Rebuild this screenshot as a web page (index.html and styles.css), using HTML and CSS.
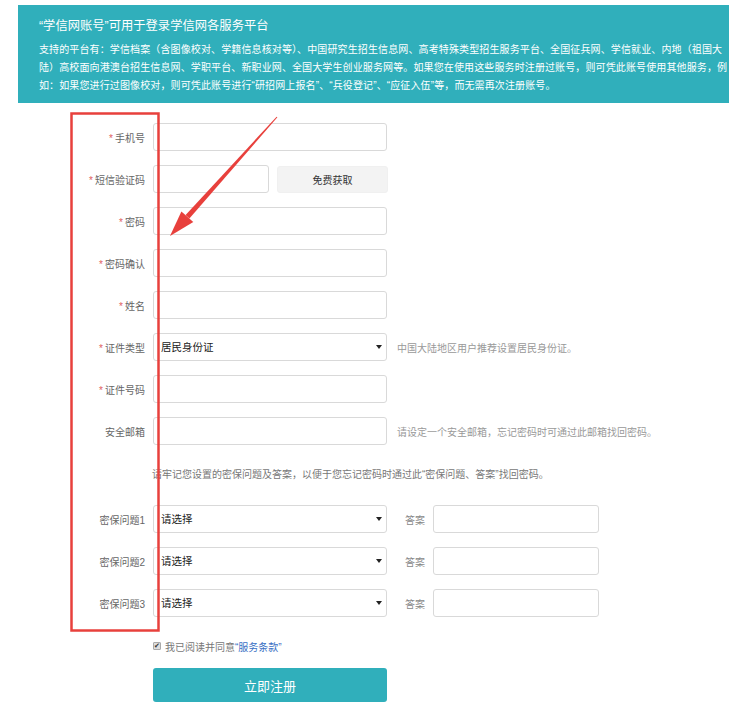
FILE: index.html
```html
<!DOCTYPE html>
<html lang="zh-CN">
<head>
    <meta charset="UTF-8">
    <meta name="viewport" content="width=device-width, initial-scale=1.0">
    <title>学信网注册</title>
    <link rel="stylesheet" href="styles.css">
</head>
<body>
    <div class="page">
        <div class="intro">
            <h2 class="intro-title">“学信网账号”可用于登录学信网各服务平台</h2>
            <p class="intro-text">支持的平台有：学信档案（含图像校对、学籍信息核对等）、中国研究生招生信息网、高考特殊类型招生服务平台、全国征兵网、学信就业、内地（祖国大陆）高校面向港澳台招生信息网、学职平台、新职业网、全国大学生创业服务网等。如果您在使用这些服务时注册过账号，则可凭此账号使用其他服务，例如：如果您进行过图像校对，则可凭此账号进行“研招网上报名”、“兵役登记”、“应征入伍”等，而无需再次注册账号。</p>
        </div>

        <form class="reg-form">
            <div class="form-row">
                <label class="form-label"><span class="req">*</span>手机号</label>
                <input class="form-input" type="text">
            </div>
            <div class="form-row">
                <label class="form-label"><span class="req">*</span>短信验证码</label>
                <input class="form-input form-input-short" type="text">
                <button type="button" class="code-btn">免费获取</button>
            </div>
            <div class="form-row">
                <label class="form-label"><span class="req">*</span>密码</label>
                <input class="form-input" type="password">
            </div>
            <div class="form-row">
                <label class="form-label"><span class="req">*</span>密码确认</label>
                <input class="form-input" type="password">
            </div>
            <div class="form-row">
                <label class="form-label"><span class="req">*</span>姓名</label>
                <input class="form-input" type="text">
            </div>
            <div class="form-row">
                <label class="form-label"><span class="req">*</span>证件类型</label>
                <span class="select-wrap">
                    <select class="form-select">
                        <option>居民身份证</option>
                    </select>
                </span>
                <span class="form-hint">中国大陆地区用户推荐设置居民身份证。</span>
            </div>
            <div class="form-row">
                <label class="form-label"><span class="req">*</span>证件号码</label>
                <input class="form-input" type="text">
            </div>
            <div class="form-row">
                <label class="form-label">安全邮箱</label>
                <input class="form-input" type="text">
                <span class="form-hint">请设定一个安全邮箱，忘记密码时可通过此邮箱找回密码。</span>
            </div>

            <p class="form-note">请牢记您设置的密保问题及答案，以便于您忘记密码时通过此“密保问题、答案”找回密码。</p>

            <div class="form-row">
                <label class="form-label">密保问题1</label>
                <span class="select-wrap">
                    <select class="form-select"><option>请选择</option></select>
                </span>
                <span class="answer-label">答案</span>
                <input class="form-input answer-input" type="text">
            </div>
            <div class="form-row">
                <label class="form-label">密保问题2</label>
                <span class="select-wrap">
                    <select class="form-select"><option>请选择</option></select>
                </span>
                <span class="answer-label">答案</span>
                <input class="form-input answer-input" type="text">
            </div>
            <div class="form-row">
                <label class="form-label">密保问题3</label>
                <span class="select-wrap">
                    <select class="form-select"><option>请选择</option></select>
                </span>
                <span class="answer-label">答案</span>
                <input class="form-input answer-input" type="text">
            </div>

            <div class="agree-row">
                <span class="check-box">&#10004;</span>
                <span>我已阅读并同意<a href="#" class="terms-link">“服务条款”</a></span>
            </div>

            <button type="button" class="submit-btn">立即注册</button>
        </form>

        <!-- red markup drawn over the screenshot -->
        <svg class="markup" width="734" height="711" viewBox="0 0 734 711">
            <rect x="71.5" y="108.5" width="87" height="517" fill="none" stroke="#e8403c" stroke-width="2.5"/>
            <polygon points="277.4,112.3 276.6,111.7 185.6,210 189.4,213.4" fill="#e8403c"/>
            <polygon points="170,231 181.4,206.4 193.3,217" fill="#e8403c"/>
        </svg>
    </div>
</body>
</html>
```

FILE: styles.css
```css
* {
    margin: 0;
    padding: 0;
    box-sizing: border-box;
}

body {
    background-color: #fff;
    font-family: "Liberation Sans", "Noto Sans CJK SC", sans-serif;
    color: #555;
}

.page {
    position: relative;
    width: 734px;
    min-height: 711px;
}

.intro {
    margin: 5px 5px 0 18px;
    padding: 11px 8px 8px 21px;
    background-color: #30afbb;
    color: #fff;
}

.intro-title {
    font-size: 12.3px;
    font-weight: normal;
    line-height: 20px;
    margin-bottom: 5px;
}

.intro-text {
    width: 690px;
    font-size: 10px;
    letter-spacing: 0.12px;
    line-height: 18px;
}

.reg-form {
    margin: 20px 0 0 53px;
}

.form-row {
    display: flex;
    align-items: center;
    height: 28px;
    margin-bottom: 14px;
}

.form-label {
    width: 100px;
    padding-right: 8px;
    text-align: right;
    font-size: 10px;
    color: #666;
}

.req {
    color: #e0605e;
    margin-right: 2px;
}

.form-input {
    width: 234px;
    height: 28px;
    border: 1px solid #d9d9d9;
    border-radius: 3px;
    background-color: #fff;
}

.form-input-short {
    width: 116px;
}

.code-btn {
    width: 111px;
    height: 27px;
    margin-left: 8px;
    border: 1px solid #f0f0f0;
    border-radius: 3px;
    background-color: #f3f3f3;
    font-family: inherit;
    font-size: 10px;
    color: #333;
}

.select-wrap {
    position: relative;
    display: inline-block;
}

.select-wrap::after {
    content: "";
    position: absolute;
    right: 5px;
    top: 12px;
    border-left: 3px solid transparent;
    border-right: 3px solid transparent;
    border-top: 4px solid #222;
}

.form-select {
    appearance: none;
    width: 234px;
    height: 28px;
    padding-left: 7px;
    border: 1px solid #d9d9d9;
    border-radius: 3px;
    background-color: #fff;
    font-family: inherit;
    font-size: 10.5px;
    color: #222;
}

.form-hint {
    margin-left: 10px;
    font-size: 10px;
    color: #999;
}

.form-note {
    height: 32px;
    margin: 0 0 14px 99px;
    font-size: 10px;
    line-height: 32px;
    color: #777;
}

.answer-label {
    margin-left: 18px;
    width: 20px;
    font-size: 10px;
    color: #888;
}

.answer-input {
    width: 166px;
    margin-left: 8px;
}

.agree-row {
    display: flex;
    align-items: center;
    height: 30px;
    margin-left: 100px;
    font-size: 10px;
    color: #777;
}

.check-box {
    width: 8px;
    height: 8px;
    margin-right: 4px;
    border: 1px solid #aaa;
    border-radius: 1px;
    background-color: #ddd;
    font-size: 7px;
    line-height: 6px;
    text-align: center;
    color: #333;
}

.terms-link {
    color: #3a6fc4;
    text-decoration: none;
}

.submit-btn {
    display: block;
    width: 234px;
    height: 34px;
    margin: 7px 0 0 100px;
    border: none;
    border-radius: 3px;
    background-color: #30afbb;
    color: #fff;
    font-family: inherit;
    font-size: 13px;
}

.markup {
    position: absolute;
    left: 0;
    top: 0;
    pointer-events: none;
}
```
